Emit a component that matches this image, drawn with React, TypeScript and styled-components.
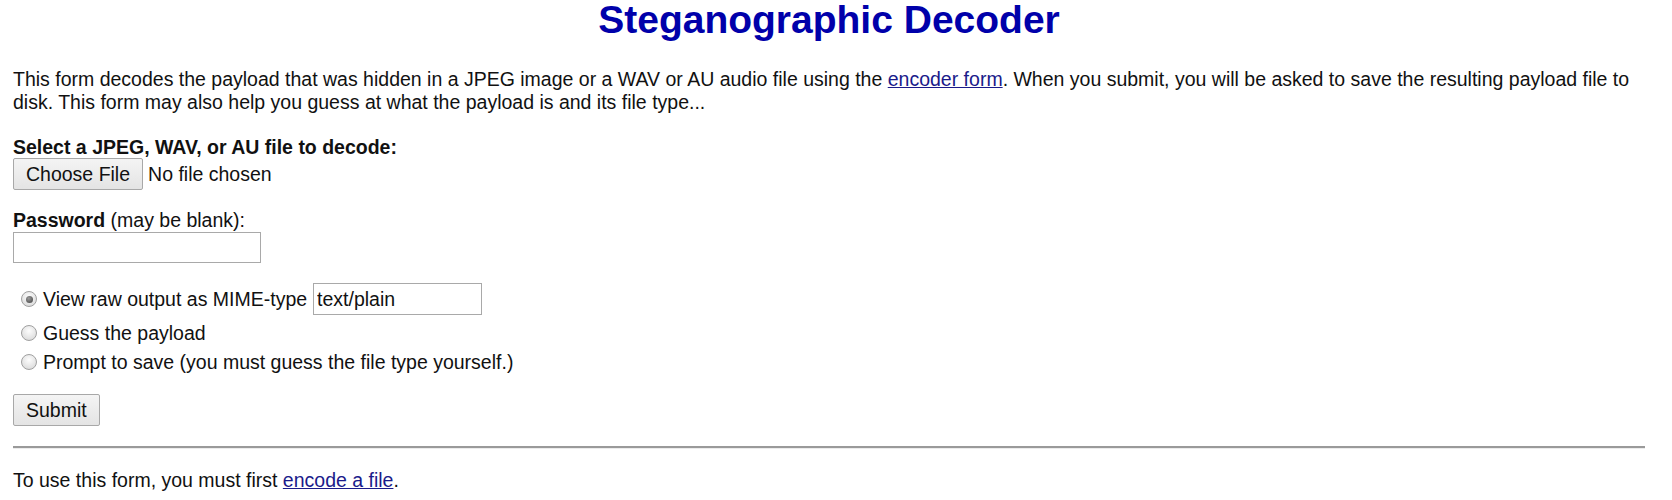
import styled, { createGlobalStyle } from "styled-components";

const Global = createGlobalStyle`
    html, body {
        margin: 0;
        padding: 0;
        background: #fff;
    }
    body {
        font-family: "Liberation Sans", Arial, sans-serif;
        font-size: 19.5px;
        line-height: 23px;
        color: #111;
    }
`;

const Page = styled.div`
    padding: 0 27px 0 13px;
`;

const Title = styled.h1`
    margin: 0;
    font-size: 39px;
    line-height: 40px;
    font-weight: bold;
    text-align: center;
    color: #0000aa;
`;

const Intro = styled.p`
    margin: 28px 0 0;
`;

const Link = styled.a`
    color: #1a1a8a;
    text-decoration: underline;
`;

const Field = styled.div<{ $top: number }>`
    margin-top: ${(p) => p.$top}px;
`;

const Label = styled.div``;

const Bold = styled.b`
    font-weight: bold;
`;

const FileRow = styled.div`
    display: flex;
    align-items: center;
    gap: 5px;
    margin-top: -1px;
`;

const Button = styled.button`
    font-family: inherit;
    font-size: 19.5px;
    color: #111;
    height: 32px;
    padding: 0 12px;
    border: 1px solid #a8a8a8;
    border-radius: 2px;
    background: linear-gradient(#f4f4f4, #e4e4e4);
`;

const TextInput = styled.input<{ $width: number; $height: number }>`
    box-sizing: border-box;
    width: ${(p) => p.$width}px;
    height: ${(p) => p.$height}px;
    margin: 0;
    padding: 0 3px;
    font-family: inherit;
    font-size: 19.5px;
    color: #111;
    border: 1px solid #a9a9a9;
    outline: none;
`;

const Options = styled.div`
    display: flex;
    flex-direction: column;
    margin-top: 20px;
    margin-left: 8px;
`;

const Option = styled.label<{ $height: number }>`
    display: flex;
    align-items: center;
    gap: 6px;
    height: ${(p) => p.$height}px;
`;

const Radio = styled.input.attrs({ type: "radio" })`
    appearance: none;
    box-sizing: border-box;
    flex: none;
    width: 16px;
    height: 16px;
    margin: 0;
    border-radius: 50%;
    border: 1px solid #a0a0a0;
    background: radial-gradient(circle at 50% 35%, #fdfdfd, #d4d4d4);
    position: relative;
    &:checked::after {
        content: "";
        position: absolute;
        left: 3.5px;
        top: 3.5px;
        width: 7px;
        height: 7px;
        border-radius: 50%;
        background: radial-gradient(circle at 40% 35%, #9a9a9a, #3f3f3f);
    }
`;

const Rule = styled.hr`
    margin: 20px 0 0;
    border: 0;
    border-top: 2px solid #9a9a9a;
    border-bottom: 1px solid #ececec;
    height: 0;
`;

const Footer = styled.p`
    margin: 20px 0 0;
`;

export default function App() {
    return (
        <Page>
            <Global />
            <Title>Steganographic Decoder</Title>
            <Intro>
                This form decodes the payload that was hidden in a JPEG image or a WAV or AU audio file using
                the <Link href="#">encoder form</Link>. When you submit, you will be asked to save the resulting
                payload file to disk. This form may also help you guess at what the payload is and its file type...
            </Intro>
            <form>
                <Field $top={22}>
                    <Label><Bold>Select a JPEG, WAV, or AU file to decode:</Bold></Label>
                    <FileRow>
                        <Button type="button">Choose File</Button>
                        <span>No file chosen</span>
                    </FileRow>
                </Field>
                <Field $top={19}>
                    <Label><Bold>Password</Bold> (may be blank):</Label>
                    <TextInput type="password" $width={248} $height={31} />
                </Field>
                <Options>
                    <Option $height={32}>
                        <Radio name="mode" defaultChecked />
                        <span>View raw output as MIME-type</span>
                        <TextInput type="text" $width={169} $height={32} defaultValue="text/plain" />
                    </Option>
                    <Option $height={36}>
                        <Radio name="mode" />
                        <span>Guess the payload</span>
                    </Option>
                    <Option $height={22}>
                        <Radio name="mode" />
                        <span>Prompt to save (you must guess the file type yourself.)</span>
                    </Option>
                </Options>
                <Field $top={21}>
                    <Button type="button">Submit</Button>
                </Field>
            </form>
            <Rule />
            <Footer>
                To use this form, you must first <Link href="#">encode a file</Link>.
            </Footer>
        </Page>
    );
}
